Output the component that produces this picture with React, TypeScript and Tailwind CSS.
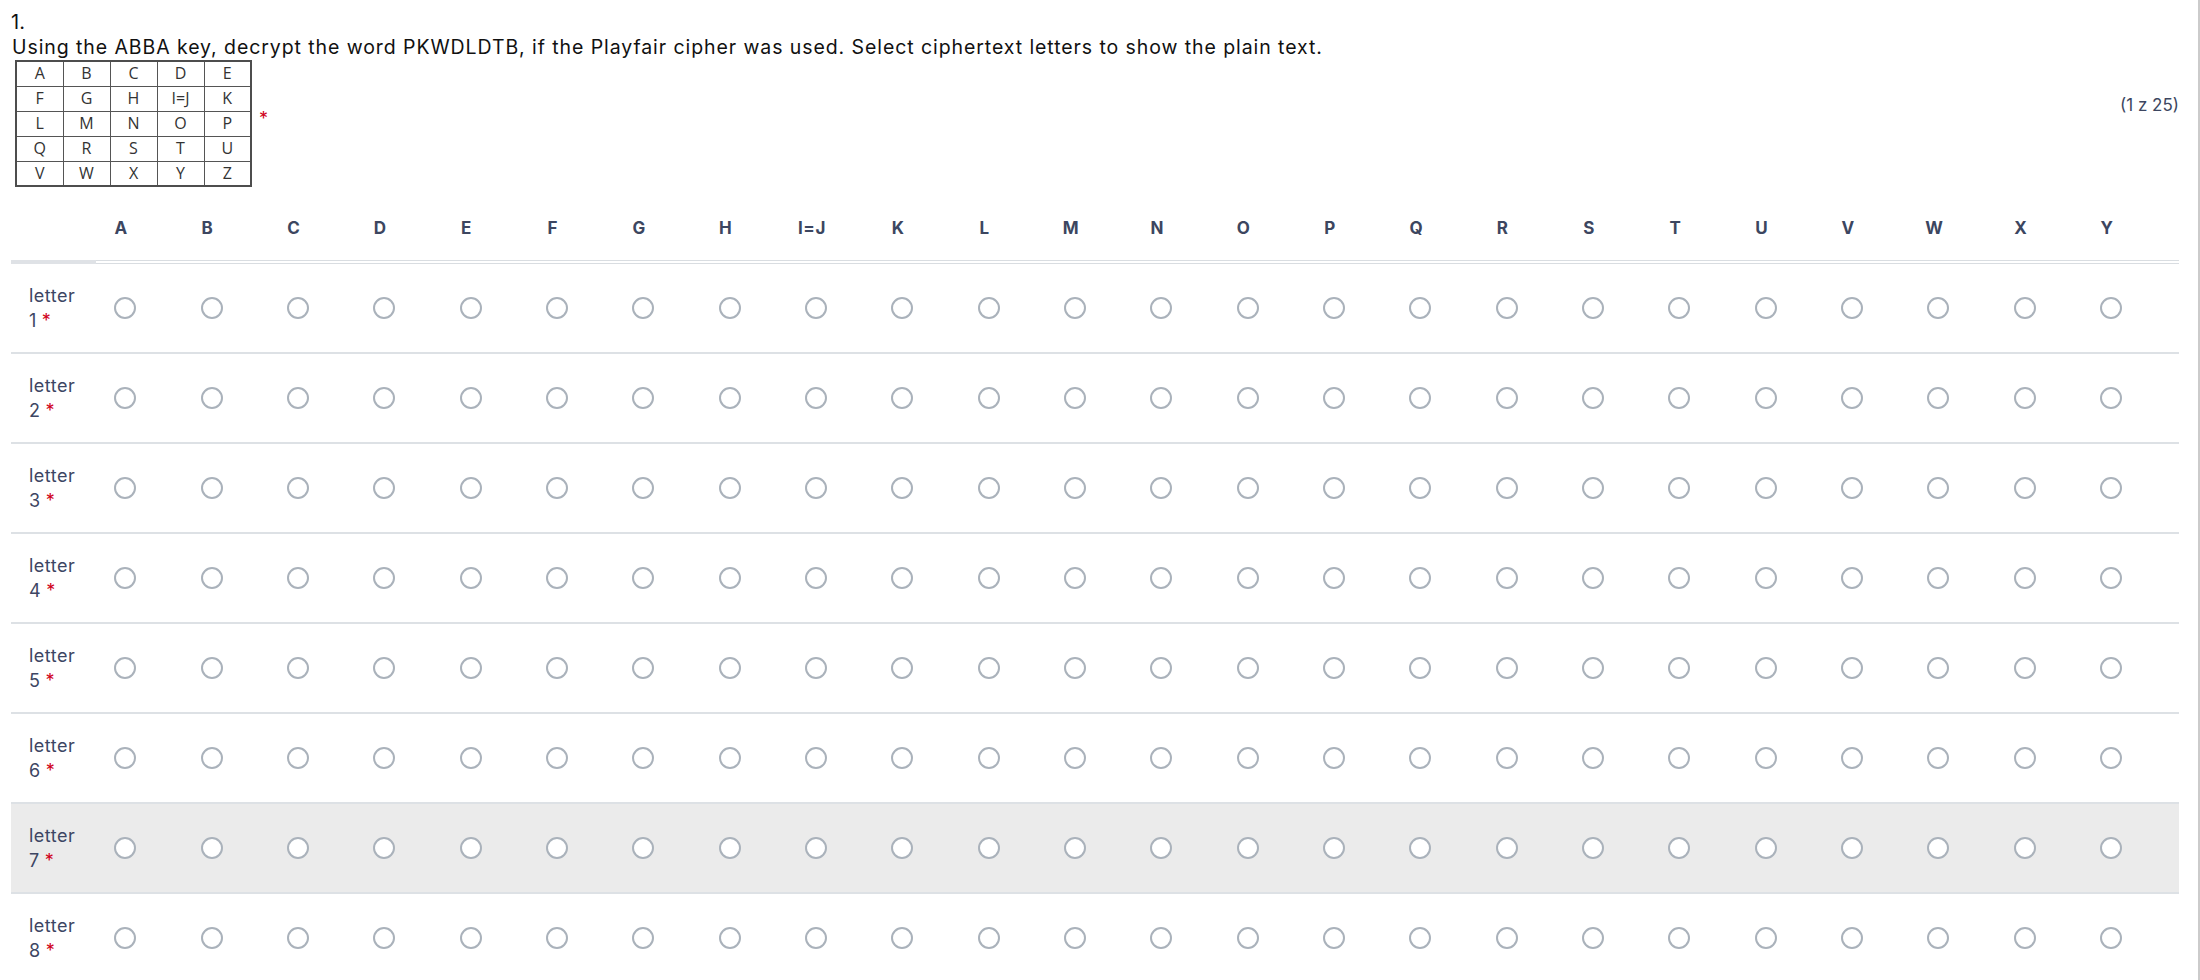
import React from 'react';

const KEY = [
  ['A', 'B', 'C', 'D', 'E'],
  ['F', 'G', 'H', 'I=J', 'K'],
  ['L', 'M', 'N', 'O', 'P'],
  ['Q', 'R', 'S', 'T', 'U'],
  ['V', 'W', 'X', 'Y', 'Z'],
];

const COLUMNS = ['A', 'B', 'C', 'D', 'E', 'F', 'G', 'H', 'I=J', 'K', 'L', 'M', 'N', 'O', 'P', 'Q', 'R', 'S', 'T', 'U', 'V', 'W', 'X', 'Y'];

const ROWS = [1, 2, 3, 4, 5, 6, 7, 8];

const Radio: React.FC = () => (
  <span className="block w-[22px] h-[22px] rounded-full border-2 border-[#aab2bb] bg-white" />
);

export default function App() {
  return (
    <div className="w-[2200px] h-[980px] overflow-hidden bg-white border-r-2 border-[#cbcbcb] font-['Inter','Open_Sans',sans-serif] text-[#3c4660]">
      <div className="pl-[11px] pr-[19px]">
        {/* Question header */}
        <div className="pt-[10px] text-[20px] leading-[24px] text-[#111111]">1.</div>
        <div className="text-[19.5px] leading-[26px] tracking-[0.92px] text-[#111111] pl-[1px]">
          Using the ABBA key, decrypt the word PKWDLDTB, if the Playfair cipher was used. Select ciphertext letters to show the plain text.
        </div>

        <div className="flex items-start">
          <table className="border-collapse border-2 border-[#4d4d4d] ml-[4px] font-['Open_Sans',sans-serif] text-[16px] text-[#333333]">
            <tbody>
              {KEY.map((row, i) => (
                <tr key={i}>
                  {row.map((c) => (
                    <td key={c} className="border border-[#555555] w-[47px] h-[25px] p-0 text-center leading-[23px]">
                      {c}
                    </td>
                  ))}
                </tr>
              ))}
            </tbody>
          </table>
          <span className="ml-[7px] mt-[49px] text-[#d0021b] text-[18px] leading-[20px]">*</span>
          <div className="flex-1" />
          <div className="mt-[33px] text-[17px] leading-[24px] text-[#3c4660]">(1 z 25)</div>
        </div>

        {/* Matrix */}
        <div className="mt-[11px]">
          <div className="grid grid-cols-[71px_repeat(24,86.35px)_1fr] h-[62px] items-center">
            <div />
            {COLUMNS.map((c) => (
              <div key={c} className="text-center pr-[8px] font-bold tracking-[0.6px] text-[17px] text-[#3c4660]">
                {c}
              </div>
            ))}
            <div />
          </div>
          <div className="flex">
            <div className="w-[85px] h-[4px] bg-[#dfe2e6]" />
            <div className="flex-1 flex flex-col justify-between h-[4px]">
              <div className="h-px bg-[#d9dde1]" />
              <div className="h-px bg-[#d9dde1]" />
            </div>
          </div>
          {ROWS.map((n) => (
            <div
              key={n}
              className={`grid grid-cols-[71px_repeat(24,86.35px)_1fr] h-[90px] items-center border-b-2 border-[#dde1e5] ${n === 7 ? 'bg-[#ebebeb]' : ''}`}
            >
              <div className="pl-[18px] text-[18px] leading-[25px] tracking-[0.5px] text-[#3d4663]">
                <div>letter</div>
                <div>
                  {n}
                  <span className="ml-[5px] text-[#d0021b]">*</span>
                </div>
              </div>
              {COLUMNS.map((c) => (
                <div key={c} className="flex justify-center">
                  <Radio />
                </div>
              ))}
              <div />
            </div>
          ))}
        </div>
      </div>
    </div>
  );
}
